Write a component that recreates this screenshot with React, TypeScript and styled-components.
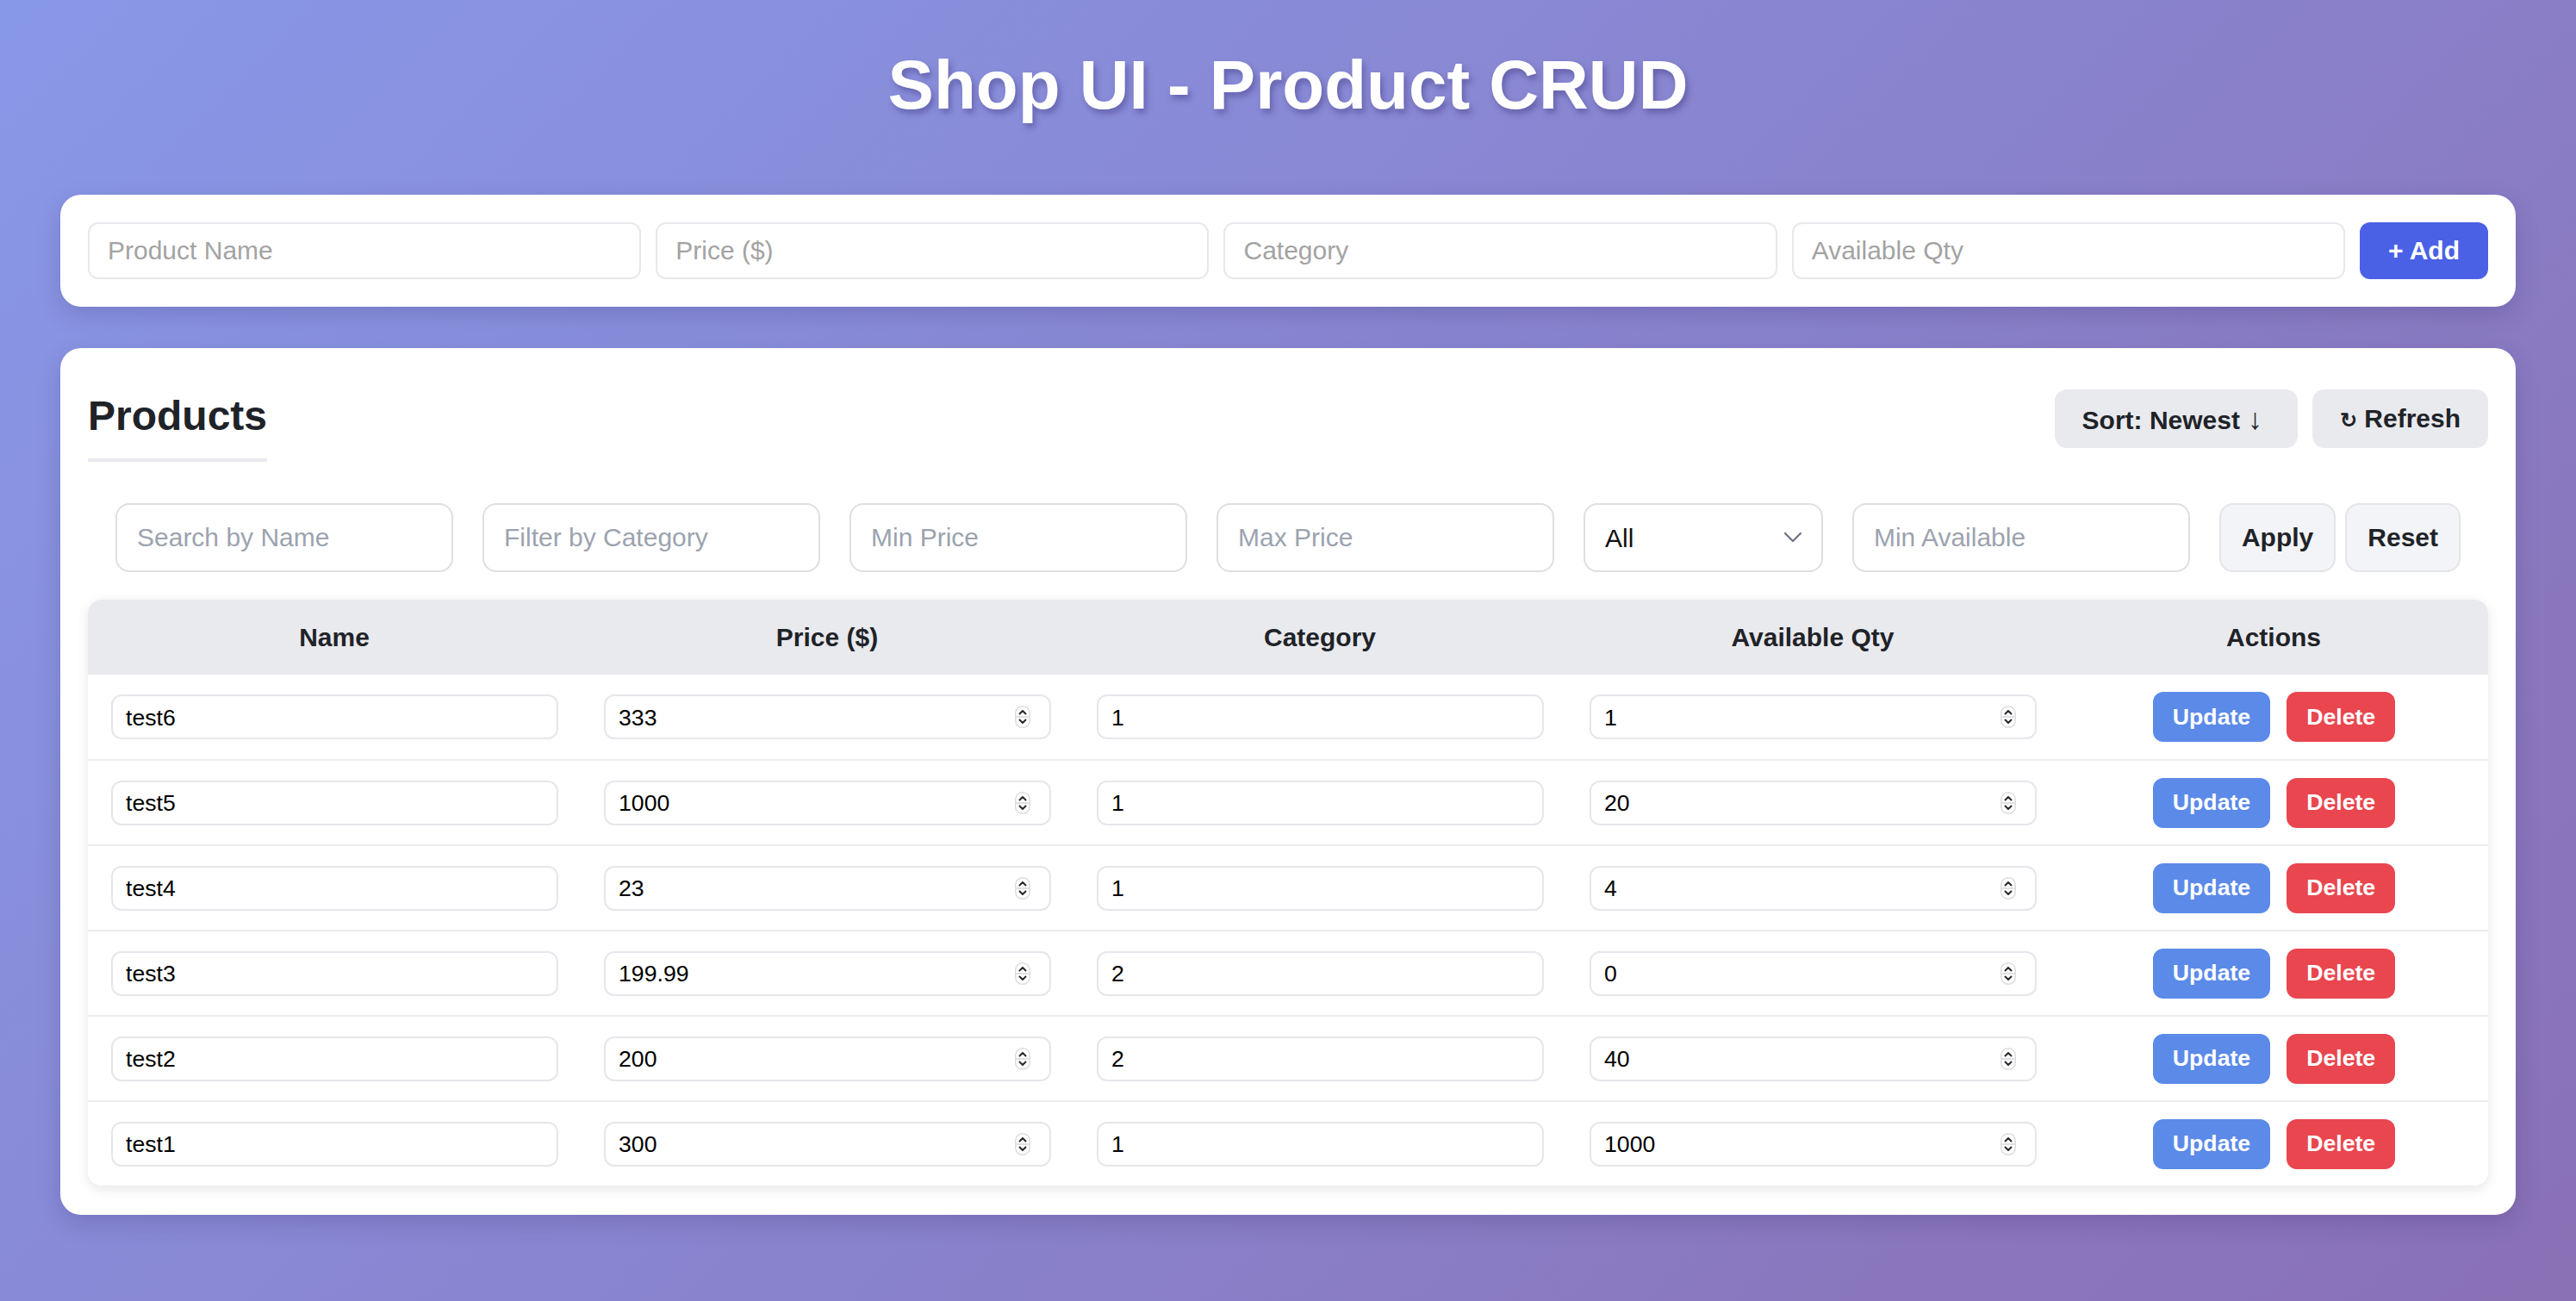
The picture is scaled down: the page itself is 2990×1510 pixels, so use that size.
import React from "react";
import styled, { createGlobalStyle } from "styled-components";

const GlobalStyle = createGlobalStyle`
    html, body {
        margin: 0;
        padding: 0;
    }
    body {
        min-height: 100vh;
        font-family: "Liberation Sans", Arial, sans-serif;
        background: linear-gradient(135deg, #8898e8 0%, #8a70b5 100%);
        background-attachment: fixed;
    }
    * {
        box-sizing: border-box;
    }
`

const Page = styled.div`
    padding: 53px 70px 60px;
`

const Title = styled.h1`
    margin: 0 0 81px;
    text-align: center;
    font-size: 80px;
    line-height: 92px;
    font-weight: 700;
    color: #ffffff;
    text-shadow: 3px 5px 7px rgba(40, 30, 100, 0.35);
`

const Card = styled.section<{ $pad?: string }>`
    background: #ffffff;
    border-radius: 24px;
    padding: ${p => p.$pad || "32px"};
    box-shadow: 0 10px 28px rgba(40, 30, 90, 0.18);
`

const AddForm = styled.div`
    display: flex;
    gap: 17px;
    align-items: stretch;
`

const AddInput = styled.input`
    flex: 1;
    min-width: 0;
    height: 66px;
    border: 2px solid #e8e8ed;
    border-radius: 12px;
    padding: 0 21px;
    font-family: "Liberation Sans", Arial, sans-serif;
    font-size: 30px;
    color: #111;
    outline: none;
    &::placeholder {
        color: #a3a3a3;
    }
`

const PrimaryButton = styled.button`
    border: 0;
    border-radius: 12px;
    padding: 0 33px;
    background: #4a61e6;
    color: #ffffff;
    font-family: "Liberation Sans", Arial, sans-serif;
    font-size: 30px;
    font-weight: 700;
    cursor: pointer;
`

const ProductsCard = styled(Card)`
    margin-top: 48px;
`

const HeaderRow = styled.div`
    display: flex;
    justify-content: space-between;
    align-items: flex-start;
`

const Heading = styled.h2`
    margin: 4px 0 0;
    font-size: 48px;
    line-height: 54px;
    font-weight: 700;
    color: #1f2328;
    padding-bottom: 22px;
    border-bottom: 4px solid #e9eaee;
`

const HeaderActions = styled.div`
    display: flex;
    gap: 17px;
`

const GreyButton = styled.button`
    height: 68px;
    border: 0;
    border-radius: 14px;
    padding: 0 32px;
    background: #e9eaee;
    color: #1f2328;
    font-family: "Liberation Sans", Arial, sans-serif;
    font-size: 30px;
    font-weight: 700;
    cursor: pointer;
`

const Glyph = styled.span<{ $size: number; $gap: number }>`
    display: inline-block;
    font-size: ${p => p.$size}px;
    margin: 0 ${p => p.$gap}px;
`

const FilterRow = styled.div`
    display: flex;
    align-items: center;
    gap: 34px;
    margin-top: 48px;
    padding: 0 32px;
`

const FilterInput = styled.input`
    width: 392px;
    height: 80px;
    border: 2px solid #dfdfe2;
    border-radius: 16px;
    padding: 0 23px;
    font-family: "Liberation Sans", Arial, sans-serif;
    font-size: 30px;
    color: #111;
    outline: none;
    &::placeholder {
        color: #9ca3af;
    }
`

const SelectBox = styled.div`
    width: 279px;
    height: 80px;
    display: flex;
    align-items: center;
    border: 2px solid #dfdfe2;
    border-radius: 16px;
    padding: 0 22px 0 23px;
    background: #fff;
`

const Select = styled.select`
    flex: 1;
    appearance: none;
    border: 0;
    outline: none;
    background: transparent;
    font-family: "Liberation Sans", Arial, sans-serif;
    font-size: 30px;
    color: #111;
`

const ButtonPair = styled.div`
    display: flex;
    gap: 11px;
`

const LightButton = styled.button`
    height: 80px;
    border: 2px solid #e4e5e9;
    border-radius: 16px;
    padding: 0 24px;
    background: #f3f4f7;
    color: #1f2328;
    font-family: "Liberation Sans", Arial, sans-serif;
    font-size: 30px;
    font-weight: 700;
    cursor: pointer;
`

const Table = styled.div`
    margin-top: 32px;
    border-radius: 16px;
    overflow: hidden;
    box-shadow: 0 4px 14px rgba(0, 0, 0, 0.1);
`

const Row = styled.div<{ $head?: boolean }>`
    display: grid;
    grid-template-columns: 572px 572px 572px 572px 1fr;
    align-items: center;
    height: ${p => (p.$head ? "87px" : "99px")};
    background: ${p => (p.$head ? "#e9eaee" : "#ffffff")};
    border-top: ${p => (p.$head ? "0" : "2px solid #ececf0")};
    &:nth-child(2) {
        border-top: 0;
        height: 98px;
    }
`

const HeadCell = styled.div`
    text-align: center;
    font-size: 30px;
    font-weight: 700;
    color: #1f2328;
`

const Cell = styled.div<{ $center?: boolean }>`
    padding: 0 26px 0 27px;
    display: flex;
    justify-content: ${p => (p.$center ? "center" : "stretch")};
    gap: 19px;
`

const CellInput = styled.input`
    width: 100%;
    height: 52px;
    border: 2px solid #e6e6ec;
    border-radius: 12px;
    padding: 2px 15px 0;
    font-family: "Liberation Sans", Arial, sans-serif;
    font-size: 26.67px;
    color: #000;
    outline: none;
`

const NumberBox = styled.div`
    width: 100%;
    height: 52px;
    display: flex;
    align-items: center;
    border: 2px solid #e6e6ec;
    border-radius: 12px;
    padding: 0 22px 0 15px;
`

const NumberInput = styled.input`
    flex: 1;
    min-width: 0;
    border: 0;
    outline: none;
    padding: 2px 0 0;
    font-family: "Liberation Sans", Arial, sans-serif;
    font-size: 26.67px;
    color: #000;
`

const ActionButton = styled.button<{ $danger?: boolean }>`
    height: 58px;
    border: 0;
    border-radius: 12px;
    padding: 0 23px;
    background: ${p => (p.$danger ? "#e9464f" : "#5b8ae8")};
    color: #fff;
    font-family: "Liberation Sans", Arial, sans-serif;
    font-size: 26.67px;
    font-weight: 700;
    cursor: pointer;
`

const Spinner = () => (
    <svg width="18" height="26" viewBox="0 0 18 26">
        <rect x="0.75" y="0.75" width="16.5" height="24.5" rx="8" fill="#fff" stroke="#dcdce0" strokeWidth="1.5" />
        <line x1="1.5" y1="13" x2="16.5" y2="13" stroke="#d6d6da" strokeWidth="1.5" />
        <path d="M5.5 9.5 L9 6 L12.5 9.5" fill="none" stroke="#2a2a2a" strokeWidth="2" strokeLinecap="round" strokeLinejoin="round" />
        <path d="M5.5 16.5 L9 20 L12.5 16.5" fill="none" stroke="#2a2a2a" strokeWidth="2" strokeLinecap="round" strokeLinejoin="round" />
    </svg>
)

const Chevron = () => (
    <svg width="22" height="14" viewBox="0 0 22 14">
        <path d="M2 2 L11 11 L20 2" fill="none" stroke="#6b7280" strokeWidth="2.2" strokeLinecap="round" strokeLinejoin="round" />
    </svg>
)

const products = [
    { name: "test6", price: "333", category: "1", qty: "1" },
    { name: "test5", price: "1000", category: "1", qty: "20" },
    { name: "test4", price: "23", category: "1", qty: "4" },
    { name: "test3", price: "199.99", category: "2", qty: "0" },
    { name: "test2", price: "200", category: "2", qty: "40" },
    { name: "test1", price: "300", category: "1", qty: "1000" },
]

const NumberField = ({ value }: { value: string }) => (
    <NumberBox>
        <NumberInput defaultValue={value} />
        <Spinner />
    </NumberBox>
)

export default function App() {
    return (
        <Page>
            <GlobalStyle />
            <Title>Shop UI - Product CRUD</Title>

            <Card>
                <AddForm>
                    <AddInput placeholder="Product Name" />
                    <AddInput placeholder="Price ($)" />
                    <AddInput placeholder="Category" />
                    <AddInput placeholder="Available Qty" />
                    <PrimaryButton>+ Add</PrimaryButton>
                </AddForm>
            </Card>

            <ProductsCard $pad="48px 32px 34px">
                <HeaderRow>
                    <Heading>Products</Heading>
                    <HeaderActions>
                        <GreyButton>Sort: Newest<Glyph $size={34} $gap={9}>↓</Glyph></GreyButton>
                        <GreyButton><Glyph $size={24} $gap={0}>↻</Glyph> Refresh</GreyButton>
                    </HeaderActions>
                </HeaderRow>

                <FilterRow>
                    <FilterInput placeholder="Search by Name" />
                    <FilterInput placeholder="Filter by Category" />
                    <FilterInput placeholder="Min Price" />
                    <FilterInput placeholder="Max Price" />
                    <SelectBox>
                        <Select defaultValue="all">
                            <option value="all">All</option>
                            <option value="in">In stock</option>
                            <option value="out">Out of stock</option>
                        </Select>
                        <Chevron />
                    </SelectBox>
                    <FilterInput placeholder="Min Available" />
                    <ButtonPair>
                        <LightButton>Apply</LightButton>
                        <LightButton>Reset</LightButton>
                    </ButtonPair>
                </FilterRow>

                <Table>
                    <Row $head>
                        <HeadCell>Name</HeadCell>
                        <HeadCell>Price ($)</HeadCell>
                        <HeadCell>Category</HeadCell>
                        <HeadCell>Available Qty</HeadCell>
                        <HeadCell>Actions</HeadCell>
                    </Row>
                    {products.map(p => (
                        <Row key={p.name}>
                            <Cell><CellInput defaultValue={p.name} /></Cell>
                            <Cell><NumberField value={p.price} /></Cell>
                            <Cell><CellInput defaultValue={p.category} /></Cell>
                            <Cell><NumberField value={p.qty} /></Cell>
                            <Cell $center>
                                <ActionButton>Update</ActionButton>
                                <ActionButton $danger>Delete</ActionButton>
                            </Cell>
                        </Row>
                    ))}
                </Table>
            </ProductsCard>
        </Page>
    )
}
